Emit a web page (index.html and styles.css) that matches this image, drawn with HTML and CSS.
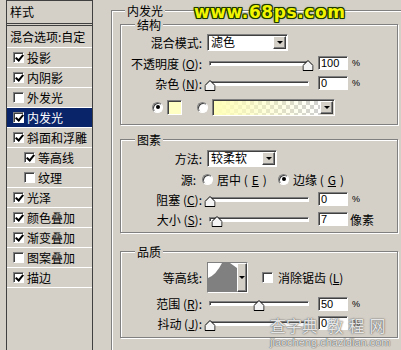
FILE: index.html
```html
<!DOCTYPE html>
<html lang="zh-CN">
<head>
    <meta charset="UTF-8">
    <title>图层样式 - 内发光</title>
    <link rel="stylesheet" href="styles.css">
</head>
<body>

<div class="dialog">
    <ul class="style-list">
        <li class="list-head">样式</li>
        <li class="list-blend">混合选项:自定</li>
        <li><span class="cb on"></span>投影</li>
        <li><span class="cb on"></span>内阴影</li>
        <li><span class="cb"></span>外发光</li>
        <li class="selected"><span class="cb on"></span>内发光</li>
        <li><span class="cb on"></span>斜面和浮雕</li>
        <li class="sub"><span class="cb on"></span>等高线</li>
        <li class="sub"><span class="cb"></span>纹理</li>
        <li><span class="cb on"></span>光泽</li>
        <li><span class="cb on"></span>颜色叠加</li>
        <li><span class="cb on"></span>渐变叠加</li>
        <li><span class="cb"></span>图案叠加</li>
        <li><span class="cb on"></span>描边</li>
    </ul>

    <fieldset class="group outer">
        <legend>内发光</legend>

        <fieldset class="group inner structure">
            <legend>结构</legend>
            <div class="row tall">
                <span class="lbl">混合模式:</span>
                <div class="select mode"><span class="val">滤色</span><span class="drop"></span></div>
            </div>
            <div class="row">
                <span class="lbl">不透明度 (<u>O</u>):</span>
                <div class="slider"><svg class="thumb" style="left:100%" viewBox="0 0 11 11"><path d="M5.5 0.5 L10.5 5.5 V10.5 H0.5 V5.5 Z"/></svg></div>
                <span class="num">100</span>
                <span class="unit">%</span>
            </div>
            <div class="row">
                <span class="lbl">杂色 (<u>N</u>):</span>
                <div class="slider"><svg class="thumb" style="left:0%" viewBox="0 0 11 11"><path d="M5.5 0.5 L10.5 5.5 V10.5 H0.5 V5.5 Z"/></svg></div>
                <span class="num">0</span>
                <span class="unit">%</span>
            </div>
            <div class="row colors">
                <span class="radio on"></span>
                <span class="swatch"></span>
                <span class="radio second"></span>
                <div class="gradient"><span class="fill"></span><span class="drop"></span></div>
            </div>
        </fieldset>

        <fieldset class="group inner elements">
            <legend>图素</legend>
            <div class="row tall">
                <span class="lbl">方法:</span>
                <div class="select method"><span class="val">较柔软</span><span class="drop"></span></div>
            </div>
            <div class="row">
                <span class="lbl source">源:</span>
                <span class="opt first"><span class="radio"></span>居中 (<u>E</u>)</span>
                <span class="opt"><span class="radio on"></span>边缘 (<u>G</u>)</span>
            </div>
            <div class="row">
                <span class="lbl">阻塞 (<u>C</u>):</span>
                <div class="slider"><svg class="thumb" style="left:0%" viewBox="0 0 11 11"><path d="M5.5 0.5 L10.5 5.5 V10.5 H0.5 V5.5 Z"/></svg></div>
                <span class="num">0</span>
                <span class="unit">%</span>
            </div>
            <div class="row">
                <span class="lbl">大小 (<u>S</u>):</span>
                <div class="slider"><svg class="thumb" style="left:7%" viewBox="0 0 11 11"><path d="M5.5 0.5 L10.5 5.5 V10.5 H0.5 V5.5 Z"/></svg></div>
                <span class="num">7</span>
                <span class="unit px">像素</span>
            </div>
        </fieldset>

        <fieldset class="group inner quality">
            <legend>品质</legend>
            <div class="row contour-row">
                <span class="lbl">等高线:</span>
                <div class="contour">
                    <svg viewBox="0 0 29 29" width="29" height="29">
                        <rect width="29" height="29" fill="#fff"/>
                        <path d="M0 29 V15 Q8 12 14 0 H22 L29 5 V29 Z" fill="#808080"/>
                    </svg>
                    <span class="drop"></span>
                </div>
                <span class="cb aa"></span>
                <span class="aa-text">消除锯齿 (<u>L</u>)</span>
            </div>
            <div class="row short">
                <span class="lbl">范围 (<u>R</u>):</span>
                <div class="slider"><svg class="thumb" style="left:50%" viewBox="0 0 11 11"><path d="M5.5 0.5 L10.5 5.5 V10.5 H0.5 V5.5 Z"/></svg></div>
                <span class="num">50</span>
                <span class="unit">%</span>
            </div>
            <div class="row">
                <span class="lbl">抖动 (<u>J</u>):</span>
                <div class="slider"><svg class="thumb" style="left:0%" viewBox="0 0 11 11"><path d="M5.5 0.5 L10.5 5.5 V10.5 H0.5 V5.5 Z"/></svg></div>
                <span class="num">0</span>
                <span class="unit">%</span>
            </div>
        </fieldset>
    </fieldset>

    <div class="logo">www.68ps.com</div>

    <div class="watermark">
        <div class="wm-big">查字典 <span class="wm-spaced">教程网</span></div>
        <div class="wm-small">jiaocheng.chazidian.com</div>
    </div>
</div>

</body>
</html>
```

FILE: styles.css
```css
* {
    box-sizing: border-box;
}

body {
    margin: 0;
    width: 401px;
    height: 350px;
    overflow: hidden;
    background: #d4d0c8;
    font-family: "Noto Sans CJK SC", "Liberation Sans", sans-serif;
    font-size: 12px;
    color: #000;
}

u {
    text-decoration: underline;
    text-underline-offset: 1px;
}

.dialog {
    position: relative;
    display: flex;
    align-items: flex-start;
    height: 350px;
}

/* left list of layer styles */
.style-list {
    flex: none;
    list-style: none;
    margin: 0 0 0 6px;
    padding: 0;
    width: 87px;
    height: 380px;
    border: 1px solid #404040;
}

.style-list li {
    display: flex;
    align-items: center;
    gap: 3px;
    height: 20px;
    padding-left: 6px;
    border-bottom: 1px solid #fff;
    line-height: 1;
    white-space: nowrap;
}

.style-list .list-head {
    height: 25px;
    padding-left: 3px;
    border-bottom: 3px double #404040;
}

.style-list .list-blend {
    height: 22px;
    padding-left: 3px;
}

.style-list .sub {
    padding-left: 17px;
}

.style-list .selected {
    background: #0a246a;
    color: #fff;
}

/* checkbox */
.cb {
    position: relative;
    flex: none;
    width: 11px;
    height: 11px;
    background: #fff;
    border: 1px solid;
    border-color: #808080 #fff #fff #808080;
    box-shadow: inset 1px 1px 0 #404040;
}

.cb.on::after {
    content: "";
    position: absolute;
    left: 3px;
    top: 0;
    width: 3px;
    height: 6px;
    border: solid #000;
    border-width: 0 2px 2px 0;
    transform: rotate(40deg);
}

/* group boxes */
.group {
    margin: 0;
    padding: 0;
    min-width: 0;
    border: 1px solid #808080;
    box-shadow: inset 1px 1px 0 #fff, 1px 1px 0 #fff;
}

.group > legend {
    padding: 0 2px;
    line-height: 13px;
    background: #d4d0c8;
}

.outer {
    flex: none;
    width: 295px;
    height: 380px;
    margin: 4px 0 0 18px;
}

.outer > legend {
    margin-left: 13px;
}

.inner {
    width: 278px;
    margin-left: 8px;
}

.inner > legend {
    margin-left: 14px;
}

.structure {
    margin-top: 1px;
    padding: 1px 0 7px;
}

.elements {
    margin-top: 8px;
    padding: 2px 0 3px;
}

.quality {
    margin-top: 12px;
    padding: 2px 0 4px;
}

/* rows */
.row {
    display: flex;
    align-items: center;
    height: 20px;
    white-space: nowrap;
}

.row.tall {
    height: 21px;
}

.row.short {
    height: 19px;
}

.lbl {
    flex: none;
    width: 81px;
    text-align: right;
}

.lbl.source {
    padding-right: 6px;
}

/* dropdowns */
.select {
    display: flex;
    height: 17px;
    margin-left: 5px;
    background: #fff;
    border: 1px solid;
    border-color: #808080 #fff #fff #808080;
    box-shadow: inset 1px 1px 0 #404040;
}

.select .val {
    flex: 1;
    padding: 0 0 0 3px;
    line-height: 14px;
}

.select.mode {
    width: 81px;
}

.select.method {
    width: 70px;
}

.drop {
    flex: none;
    display: flex;
    align-items: center;
    justify-content: center;
    width: 13px;
    margin: 1px 1px 1px 0;
    background: #d4d0c8;
    border: 1px solid;
    border-color: #fff #404040 #404040 #fff;
    box-shadow: inset -1px -1px 0 #808080;
}

.drop::after {
    content: "";
    border-top: 3px solid #000;
    border-left: 3px solid transparent;
    border-right: 3px solid transparent;
}

/* sliders */
.slider {
    position: relative;
    flex: none;
    width: 100px;
    height: 5px;
    margin-left: 7px;
    background: #fff;
    border: 1px solid;
    border-color: #808080 #fff #fff #808080;
    box-shadow: inset 1px 1px 0 #404040;
}

.thumb {
    position: absolute;
    top: -2px;
    width: 11px;
    height: 11px;
    transform: translateX(-50%);
}

.thumb path {
    fill: #f4f4f4;
    stroke: #000;
    stroke-width: 1;
}

.num {
    flex: none;
    width: 30px;
    height: 14px;
    margin-left: 9px;
    padding-left: 2px;
    background: #fff;
    border: 1px solid;
    border-color: #808080 #fff #fff #808080;
    box-shadow: inset 1px 1px 0 #404040;
    font-family: "Liberation Sans", sans-serif;
    font-size: 11px;
    line-height: 12px;
}

.unit {
    margin-left: 4px;
    font-family: "Liberation Sans", sans-serif;
    font-size: 9px;
}

.unit.px {
    margin-left: 2px;
    font-family: "Noto Sans CJK SC", sans-serif;
    font-size: 12px;
}

/* radios */
.radio {
    position: relative;
    flex: none;
    width: 11px;
    height: 11px;
    border-radius: 50%;
    background: #fff;
    border: 1px solid;
    border-color: #808080 #fff #fff #808080;
    box-shadow: inset 1px 1px 0 #404040;
}

.radio.on::after {
    content: "";
    position: absolute;
    left: 2.5px;
    top: 2.5px;
    width: 4px;
    height: 4px;
    border-radius: 50%;
    background: #000;
}

.colors {
    margin-top: 4px;
    padding-left: 31px;
}

.swatch {
    flex: none;
    width: 15px;
    height: 15px;
    margin-left: 4px;
    background: #ffffc4;
    border: 1px solid;
    border-color: #808080 #fff #fff #808080;
    box-shadow: inset 1px 1px 0 #404040;
}

.radio.second {
    margin-left: 15px;
}

.gradient {
    display: flex;
    flex: none;
    width: 123px;
    height: 17px;
    margin-left: 4px;
    border: 1px solid;
    border-color: #808080 #fff #fff #808080;
    box-shadow: inset 1px 1px 0 #404040;
}

.gradient .fill {
    flex: 1;
    margin: 1px 0 0 1px;
    background:
        linear-gradient(to right, #ffffb8, rgba(255, 255, 184, 0)),
        repeating-conic-gradient(#d0d0d0 0 25%, #fff 0 50%) 0 0 / 8px 8px;
}

.opt {
    display: flex;
    align-items: center;
    gap: 4px;
}

.opt.first {
    width: 76px;
}

/* contour picker */
.contour-row {
    height: 34px;
}

.contour {
    display: flex;
    flex: none;
    width: 41px;
    height: 31px;
    margin-left: 5px;
    background: #fff;
    border: 1px solid;
    border-color: #808080 #fff #fff #808080;
}

.contour .drop {
    width: 10px;
    margin: 0;
}

.cb.aa {
    margin-left: 14px;
}

.aa-text {
    margin-left: 5px;
}

/* overlays */
.logo {
    position: absolute;
    left: 194px;
    top: 2px;
    font-family: "DejaVu Sans", sans-serif;
    font-weight: bold;
    font-size: 17px;
    letter-spacing: 0.6px;
    color: #f2f500;
    text-shadow:
        1px 0 0 #1c3a00, -1px 0 0 #1c3a00, 0 1px 0 #1c3a00, 0 -1px 0 #1c3a00,
        1px 1px 0 #1c3a00, -1px -1px 0 #1c3a00, 1px -1px 0 #1c3a00, -1px 1px 0 #1c3a00,
        0 0 3px #3d6b00;
}

.watermark {
    position: absolute;
    left: 270px;
    top: 315px;
    color: rgba(255, 255, 255, 0.85);
}

.wm-big {
    font-size: 16px;
    line-height: 21px;
    text-shadow: 0 0 1px #555, 0 0 2px #777;
}

.wm-spaced {
    letter-spacing: 5px;
    margin-left: 6px;
}

.wm-small {
    font-family: "Liberation Sans", sans-serif;
    font-size: 11px;
    line-height: 12px;
    text-shadow: 0 0 1px #555, 0 0 1px #555;
}
```
